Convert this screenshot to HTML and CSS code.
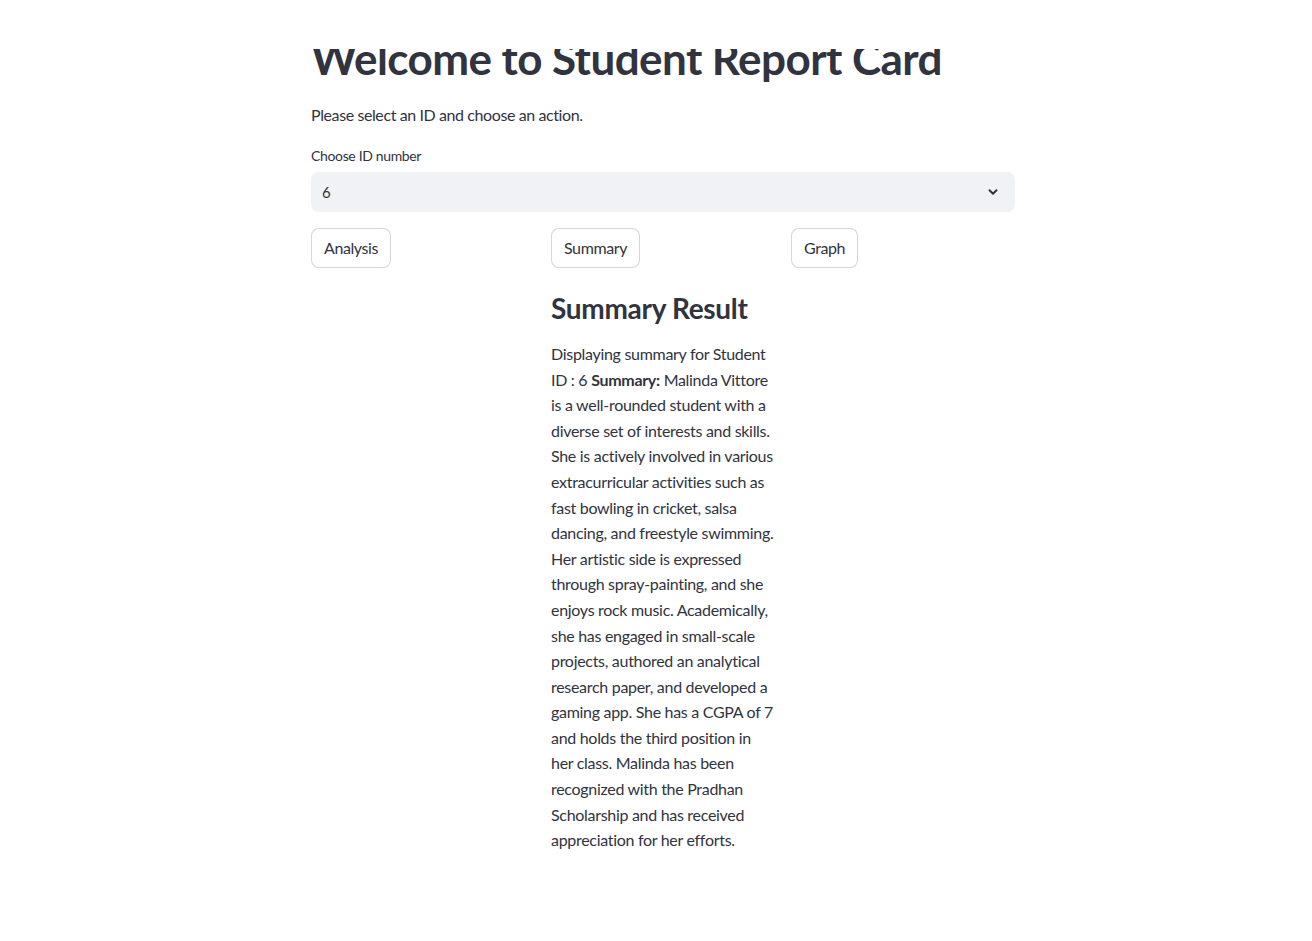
FILE: index.html
```html
<!DOCTYPE html>
<html>
<head>
<meta charset="utf-8">
<title>Student Report Card</title>
<link rel="stylesheet" href="styles.css">
</head>
<body>
<header class="app-header"></header>
<main class="main">
  <h1 class="title">Welcome to Student Report Card</h1>
  <p class="intro">Please select an ID and choose an action.</p>
  <div class="field">
    <label class="field-label">Choose ID number</label>
    <div class="select">
      <span class="select-value">6</span>
      <svg class="chevron" width="16" height="16" viewBox="0 0 16 16"><path d="M4.5 6.2 L8 9.7 L11.5 6.2" fill="none" stroke="#31333f" stroke-width="2" stroke-linecap="round" stroke-linejoin="round"/></svg>
    </div>
  </div>
  <div class="columns">
    <div class="col"><button class="btn">Analysis</button></div>
    <div class="col">
      <button class="btn">Summary</button>
      <h3 class="result-title">Summary Result</h3>
      <p class="result-text">Displaying summary for Student ID : 6 <strong>Summary:</strong> Malinda Vittore is a well-rounded student with a diverse set of interests and skills. She is actively involved in various extracurricular activities such as fast bowling in cricket, salsa dancing, and freestyle swimming. Her artistic side is expressed through spray-painting, and she enjoys rock music. Academically, she has engaged in small-scale projects, authored an analytical research paper, and developed a gaming app. She has a CGPA of 7 and holds the third position in her class. Malinda has been recognized with the Pradhan Scholarship and has received appreciation for her efforts.</p>
    </div>
    <div class="col"><button class="btn">Graph</button></div>
  </div>
</main>
</body>
</html>
```
FILE: styles.css
```css
* { box-sizing: border-box; }
html, body { margin: 0; padding: 0; background: #fff; }
body {
  font-family: Lato, "Noto Sans", sans-serif;
  color: #31333f;
  font-size: 16px;
  letter-spacing: -0.4px;
}
.app-header {
  position: fixed;
  top: 0; left: 0; right: 0;
  height: 49px;
  background: #fff;
  z-index: 10;
}
.main {
  width: 704px;
  margin: 0 auto;
  position: relative;
  left: 7px;
  padding-top: 32px;
  padding-bottom: 80px;
}
.title {
  margin: 0;
  font-size: 44px;
  font-weight: 700;
  line-height: 1.2;
  letter-spacing: -0.57px;
}
.intro {
  margin: 17px 0 0;
  line-height: 25.6px;
}
.field { margin-top: 18px; }
.field-label {
  display: block;
  font-size: 14px;
  letter-spacing: -0.35px;
  line-height: 22px;
  margin-bottom: 5px;
}
.select {
  height: 40px;
  background: #f0f2f6;
  border-radius: 8px;
  display: flex;
  align-items: center;
  justify-content: space-between;
  padding: 0 14px 0 11px;
}
.select-value { font-size: 15px; }
.chevron { display: block; }
.columns {
  display: grid;
  grid-template-columns: repeat(3, 1fr);
  gap: 16px;
  margin-top: 16px;
  align-items: start;
}
.btn {
  font: inherit;
  color: inherit;
  letter-spacing: inherit;
  background: #fff;
  border: 1px solid rgba(49, 51, 63, 0.2);
  border-radius: 8px;
  height: 40px;
  padding: 0 12px 1px;
  cursor: pointer;
}
.result-title {
  margin: 24px 0 0;
  font-size: 28px;
  font-weight: 700;
  line-height: 1.2;
  letter-spacing: -0.3px;
}
.result-text {
  margin: 15px 0 0;
  line-height: 25.6px;
  letter-spacing: -0.3px;
}
.result-text strong { font-weight: 700; }
```
